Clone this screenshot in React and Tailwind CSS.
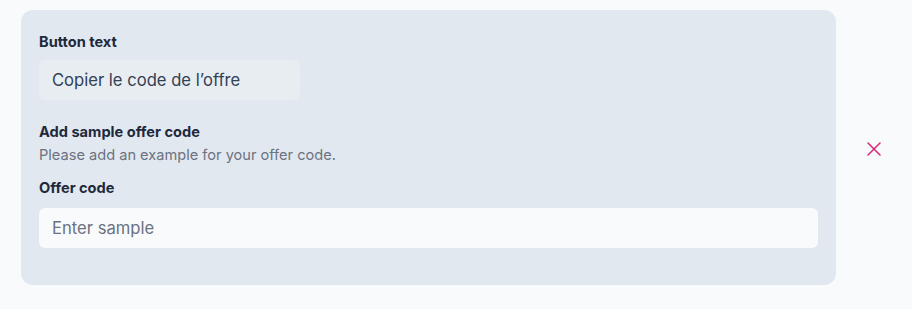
export default function App() {
  return (
    <div className="min-h-[309px] w-full bg-[#f8fafc] pl-[21px] pt-[10px]" style={{ fontFamily: "Inter, 'Noto Sans', sans-serif" }}>
      <div className="flex">
        <div className="w-[815px] shrink-0 rounded-xl bg-[#e2e8f0] px-[18px] pt-[22px] pb-[37px]">
          <div className="text-[14.6px] leading-5 font-bold text-[#1e293b]">Button text</div>
          <div className="mt-2 flex h-10 w-[261px] items-center rounded-md bg-[#e8edf2] px-[13px] text-[16.6px] text-[#334155]">
            Copier le code de l’offre
          </div>
          <div className="mt-[22px] text-[14.6px] leading-5 font-bold text-[#1e293b]">Add sample offer code</div>
          <div className="mt-[3px] text-[14.6px] leading-5 text-[#6b7280]">Please add an example for your offer code.</div>
          <div className="mt-[13px] text-[14.6px] leading-5 font-bold text-[#1e293b]">Offer code</div>
          <input
            className="mt-[10px] block h-10 w-full rounded-md bg-[#f8fafc] px-[13px] text-[16.6px] text-[#334155] placeholder:text-[#6b7280] outline-none"
            placeholder="Enter sample"
          />
        </div>
        <div className="flex flex-1 items-center justify-center pt-[2px]">
          <svg width="14" height="14" viewBox="0 0 14 14" fill="none" stroke="#db2777" strokeWidth="1.5" strokeLinecap="round">
            <path d="M1 1 13 13M13 1 1 13" />
          </svg>
        </div>
      </div>
    </div>
  );
}
